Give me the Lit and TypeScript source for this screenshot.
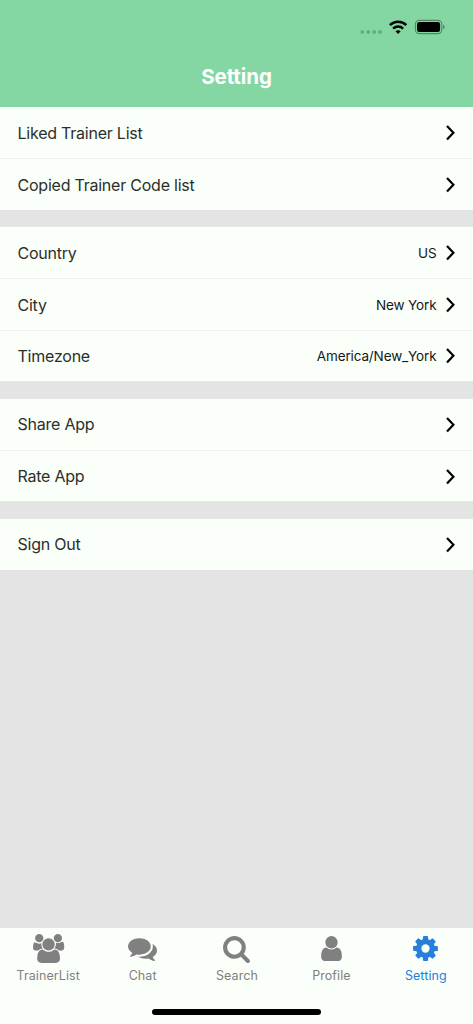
import { LitElement, html, css, svg } from "lit";
import { customElement, property } from "lit/decorators.js";

interface Item {
  label: string;
  value?: string;
}

const GROUPS: Item[][] = [
  [{ label: "Liked Trainer List" }, { label: "Copied Trainer Code list" }],
  [
    { label: "Country", value: "US" },
    { label: "City", value: "New York" },
    { label: "Timezone", value: "America/New_York" },
  ],
  [{ label: "Share App" }, { label: "Rate App" }],
  [{ label: "Sign Out" }],
];

const TABS = [
  {
    label: "TrainerList",
    box: 2048,
    path: "M657 896q-162 5-265 128h-134q-82 0-138-40.5t-56-118.5q0-353 124-353 6 0 43.5 21t97.5 42.5 119 21.5q67 0 133-23-5 37-5 66 0 159 93 293zm1071 637q0 120-73 189.5t-194 69.5h-874q-121 0-194-69.5t-73-189.5q0-53 3.5-103.5t14-109 26.5-108.5 43-97.5 62-81 85.5-53.5 111.5-20q10 0 43 21.5t73 48 107 48 135 21.5 135-21.5 107-48 73-48 43-21.5q61 0 111.5 20t85.5 53.5 62 81 43 97.5 26.5 108.5 14 109 3.5 103.5zm-1024-1277q0 106-75 181t-181 75-181-75-75-181 75-181 181-75 181 75 75 181zm704 384q0 159-112.5 271.5t-271.5 112.5-271.5-112.5-112.5-271.5 112.5-271.5 271.5-112.5 271.5 112.5 112.5 271.5zm576 225q0 78-56 118.5t-138 40.5h-134q-103-123-265-128 93-134 93-293 0-29-5-66 66 23 133 23 59 0 119-21.5t97.5-42.5 43.5-21q124 0 124 353zm-128-609q0 106-75 181t-181 75-181-75-75-181 75-181 181-75 181 75 75 181z",
  },
  {
    label: "Chat",
    box: 1792,
    path: "M1408 768q0 139-94 257t-256.500 186.500-353.500 68.500q-86 0-176-16-124 88-278 128-36 9-86 16h-3q-11 0-20.500-8t-11.500-21q-1-3-1-6.500t.5-6.500 2-6l2.500-5 3.500-5.500 4-5 4.500-5 4-4.500q5-6 23-25t26-29.500 22.500-29 25-38.500 20.500-44q-124-72-195-177t-71-224q0-139 94-257t256.500-186.500 353.500-68.500 353.500 68.500 256.500 186.500 94 257zm384 256q0 120-71 224.500t-195 176.500q10 24 20.500 44t25 38.500 22.500 29 26 29.500 23 25q1 1 4 4.500t4.500 5 4 5 3.500 5.500l2.500 5 2 6 .5 6.500-1 6.500q-3 14-13 22t-22 7q-50-7-86-16-154-40-278-128-90 16-176 16-271 0-472-132 58 4 88 4 161 0 309-45t264-129q125-92 192-212t67-254q0-77-23-152 129 71 204 178t75 230z",
  },
  {
    label: "Search",
    box: 1792,
    path: "M1216 832q0-185-131.5-316.5t-316.5-131.5-316.5 131.5-131.5 316.5 131.5 316.5 316.5 131.5 316.5-131.5 131.5-316.5zm512 832q0 52-38 90t-90 38q-54 0-90-38l-343-342q-179 124-399 124-143 0-273.5-55.5t-225-150-150-225-55.5-273.5 55.5-273.5 150-225 225-150 273.5-55.5 273.5 55.5 225 150 150 225 55.5 273.5q0 220-124 399l343 343q37 37 37 90z",
  },
  {
    label: "Profile",
    box: 1792,
    path: "M1536 1399q0 109-62.5 187t-150.5 78h-854q-88 0-150.5-78t-62.5-187q0-85 8.5-160.5t31.5-152 58.5-131 94-89 134.5-34.5q131 128 313 128t313-128q76 0 134.5 34.5t94 89 58.5 131 31.5 152 8.5 160.5zm-256-887q0 159-112.5 271.5t-271.5 112.5-271.5-112.5-112.5-271.5 112.5-271.5 271.5-112.5 271.5 112.5 112.5 271.5z",
  },
  {
    label: "Setting",
    box: 1792,
    active: true,
    path: "M1152 896q0-106-75-181t-181-75-181 75-75 181 75 181 181 75 181-75 75-181zm512-109v222q0 12-8 23t-20 13l-185 28q-19 54-39 91 35 50 107 138 10 12 10 25t-9 23q-27 37-99 108t-94 71q-12 0-26-9l-138-108q-44 23-91 38-16 136-29 186-7 28-36 28h-222q-14 0-24.5-8.5t-11.5-21.5l-28-184q-49-16-90-37l-141 107q-10 9-25 9-14 0-25-11-126-114-165-168-7-10-7-23 0-12 8-23 15-21 51-66.5t54-70.5q-27-50-41-99l-183-27q-13-2-21-12.5t-8-23.5v-222q0-12 8-23t19-13l186-28q14-46 39-92-40-57-107-138-10-12-10-24 0-10 9-23 26-36 98.5-107.5t94.500-71.500q13 0 26 10l138 107q44-23 91-38 16-136 29-186 7-28 36-28h222q14 0 24.500 8.500t11.500 21.500l28 184q49 16 90 37l142-107q9-9 24-9 13 0 25 10 129 119 165 170 7 8 7 22 0 12-8 23-15 21-51 66.500t-54 70.500q26 50 41 98l183 28q13 2 21 12.500t8 23.500z",
  },
];

@customElement("setting-row")
class SettingRow extends LitElement {
  @property() label = "";
  @property() value = "";

  static styles = css`
    :host {
      display: flex;
      align-items: center;
      box-sizing: border-box;
      height: 51.35px;
      padding: 0 17px 0 17.5px;
      background: #fbfffa;
    }
    .label {
      flex: 1;
      font-size: 16px;
      letter-spacing: -0.23px;
      color: #2b2f2b;
    }
    .value {
      font-size: 13.5px;
      letter-spacing: -0.13px;
      color: #151815;
      margin-right: 8.5px;
      padding-top: 1px;
    }
    .chevron {
      display: block;
      width: 11px;
      height: 17px;
    }
  `;

  render() {
    return html`
      <span class="label">${this.label}</span>
      ${this.value ? html`<span class="value">${this.value}</span>` : null}
      <svg class="chevron" viewBox="0 0 11 17">
        <path d="M2 2.1 8.400 8.800 2 15.500" fill="none" stroke="#000" stroke-width="2.2" />
      </svg>
    `;
  }
}

@customElement("app-root")
class AppRoot extends LitElement {
  static styles = css`
    :host {
      display: flex;
      flex-direction: column;
      width: 473px;
      height: 1024px;
      overflow: hidden;
      background: #e4e4e4;
      font-family: Inter, "Liberation Sans", sans-serif;
    }
    .header {
      height: 107px;
      display: flex;
      flex-direction: column;
      background: #84d7a2;
    }
    .status {
      height: 54px;
      display: flex;
      justify-content: flex-end;
      padding-right: 27px;
    }
    .status-icons {
      display: block;
      width: 86px;
      height: 54px;
    }
    .title {
      margin: 0;
      height: 46px;
      line-height: 46px;
      text-align: center;
      font-size: 20.5px;
      font-weight: 700;
      letter-spacing: -0.1px;
      color: #fff;
    }
    .content {
      flex: 1;
      display: flex;
      flex-direction: column;
      gap: 17.4px;
    }
    .group {
      display: flex;
      flex-direction: column;
    }
    .divided {
      border-top: 1px solid #eff3ef;
    }
    .tabs {
      height: 96px;
      display: flex;
      flex-direction: column;
      justify-content: space-between;
      align-items: center;
      background: #fbfffa;
    }
    .tab-list {
      align-self: stretch;
      display: grid;
      grid-template-columns: repeat(5, 1fr);
      padding: 6px 0 0 1px;
    }
    .tab {
      display: flex;
      flex-direction: column;
      align-items: center;
      color: #808080;
    }
    .active {
      color: #2680d9;
    }
    .icon {
      display: block;
      height: 29px;
      fill: currentColor;
    }
    .tab-label {
      margin-top: 5px;
      font-size: 12.5px;
      line-height: 16px;
      letter-spacing: 0.07px;
    }
    .home {
      width: 169px;
      height: 6px;
      border-radius: 3px;
      background: #000;
      margin-bottom: 9px;
    }
  `;

  render() {
    return html`
      <header class="header">
        <div class="status">
          <svg class="status-icons" viewBox="360 0 86 54">
            <g fill="#69ac82">
              <circle cx="362.300" cy="32" r="2" />
              <circle cx="368.300" cy="32" r="2" />
              <circle cx="374.200" cy="32" r="2" />
              <circle cx="380" cy="32" r="2" />
            </g>
            <g fill="none" stroke="#000" stroke-width="2.500">
              <path d="M389.900 25.200a11.700 11.700 0 0 1 16.400 0" />
              <path d="M393.100 28.600a7.200 7.200 0 0 1 10 0" />
            </g>
            <path d="M398.100 33.900l-2.600-2.600a3.900 3.900 0 0 1 5.200 0z" />
            <rect x="415.400" y="20.400" width="26.400" height="13.200" rx="3.800" fill="none" stroke="#528665" stroke-width="1.100" />
            <rect x="417" y="22" width="23.100" height="10" rx="2.200" />
            <path d="M443 24.800q1.800.7 1.800 2.200t-1.800 2.200z" fill="#528665" />
          </svg>
        </div>
        <h1 class="title">Setting</h1>
      </header>
      <main class="content">
        ${GROUPS.map(
          (group) => html`<section class="group">
            ${group.map(
              (item, i) => html`<setting-row
                class=${i ? "divided" : ""}
                .label=${item.label}
                .value=${item.value ?? ""}
              ></setting-row>`
            )}
          </section>`
        )}
      </main>
      <nav class="tabs">
        <div class="tab-list">
          ${TABS.map(
            (tab) => html`<div class="tab ${tab.active ? "active" : ""}">
              <svg class="icon" viewBox="0 0 ${tab.box} 1792">${svg`<path d=${tab.path} />`}</svg>
              <span class="tab-label">${tab.label}</span>
            </div>`
          )}
        </div>
        <div class="home"></div>
      </nav>
    `;
  }
}
